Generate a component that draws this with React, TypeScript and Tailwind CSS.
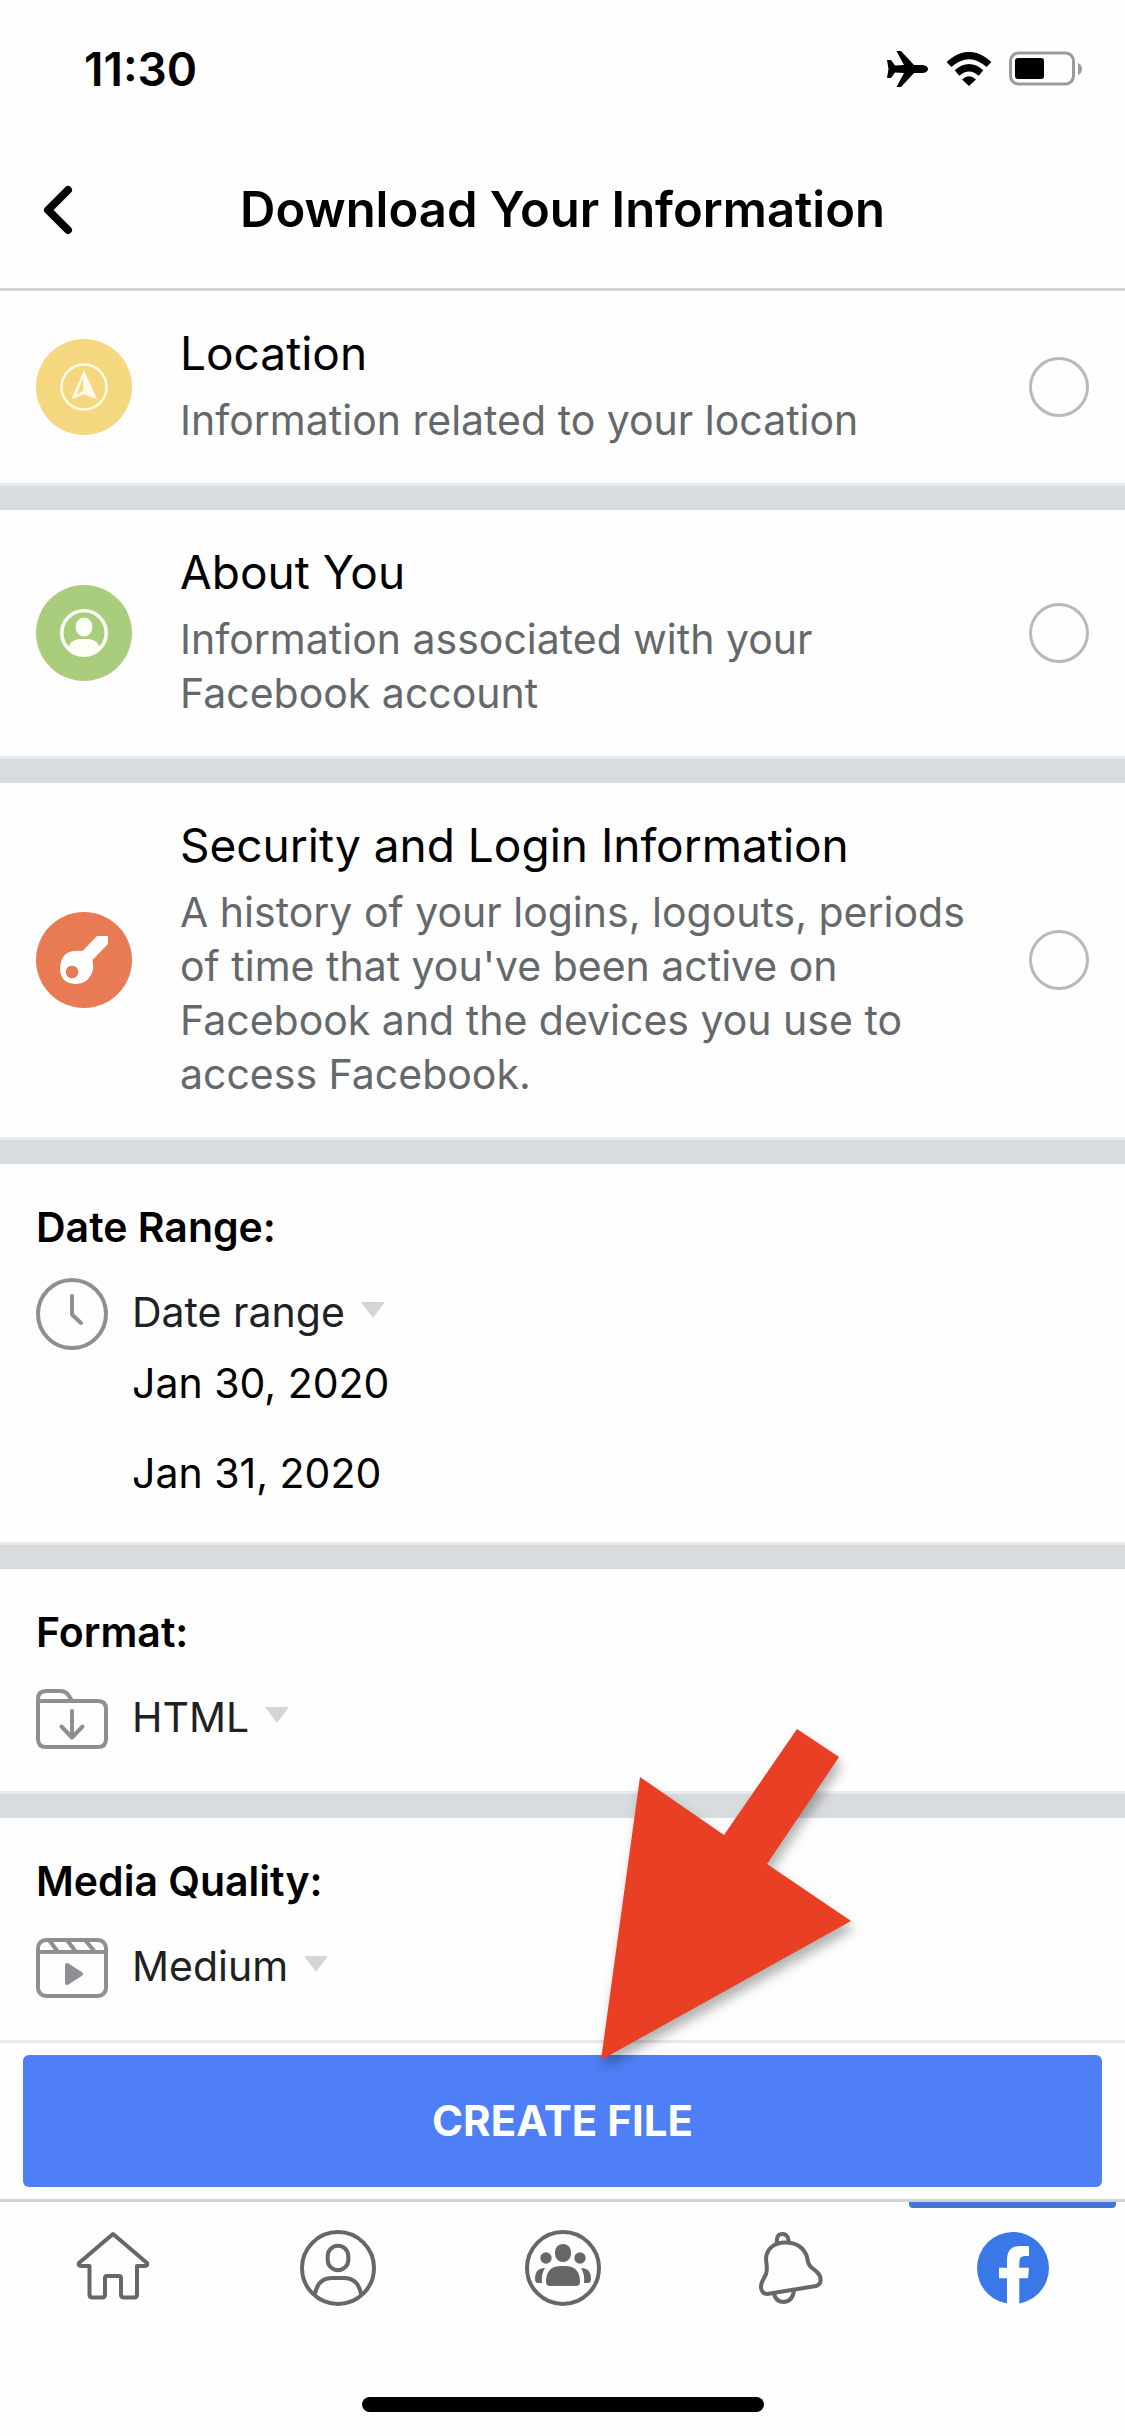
import { ReactNode, useState } from "react";

type Category = {
  id: string;
  title: string;
  description: string;
  color: string;
  icon: ReactNode;
};

const categories: Category[] = [
  {
    id: "location",
    title: "Location",
    description: "Information related to your location",
    color: "bg-[#f4d77e]",
    icon: (
      <svg viewBox="0 0 48 48" className="size-12" fill="none">
        <circle cx="24" cy="24" r="22.5" stroke="#fffbe8" strokeWidth="2.5" />
        <path d="M24 7 L37 36 Q30 34.500 24 31 Q18 34.500 11.500 36 Z" fill="#fffbe8" />
        <path d="M23 15 V28 L16.500 32 Z" fill="#f4d77e" />
      </svg>
    ),
  },
  {
    id: "about",
    title: "About You",
    description: "Information associated with your Facebook account",
    color: "bg-[#aacd7d]",
    icon: (
      <svg viewBox="0 0 48 48" className="size-12" fill="none">
        <circle cx="24" cy="24" r="22.2" stroke="#fbfff5" strokeWidth="3.6" />
        <ellipse cx="24" cy="18" rx="8.500" ry="9.500" fill="#fbfff5" />
        <path d="M8 39 Q10 31 19 30 H29 Q38 31 40 39 Q33 47 24 47 Q15 47 8 39 Z" fill="#fbfff5" />
      </svg>
    ),
  },
  {
    id: "security",
    title: "Security and Login Information",
    description:
      "A history of your logins, logouts, periods of time that you've been active on Facebook and the devices you use to access Facebook.",
    color: "bg-[#e87a54]",
    icon: (
      <svg viewBox="0 0 48 48" className="size-12">
        <path
          fillRule="evenodd"
          fill="#fff"
          d="M37 0 H48 V8 L32.500 24 Q33.500 29 33 34 Q29 48 15 48 Q0 47 0 32 Q1 17 13 15 Q18 14.500 22.500 15 Z M12 29.700 a6.300 6.300 0 1 0 0.100 0 Z"
        />
      </svg>
    ),
  },
];

const Divider = () => (
  <div className="h-[27px] bg-[#d9dcde] border-t-3 border-[#e8eaeb]" />
);

const Caret = () => (
  <svg viewBox="0 0 24 16" className="w-6 h-4 mb-2 pointer-events-none">
    <path d="M0 0 H24 L12 16 Z" fill="#d3d5d8" />
  </svg>
);

const ClockIcon = () => (
  <svg
    viewBox="0 0 72 72"
    className="size-18"
    fill="none"
    stroke="#8d8f92"
    strokeWidth="4"
    strokeLinecap="round"
    strokeLinejoin="round"
  >
    <circle cx="36" cy="36" r="34" />
    <path d="M36 18 V36.500 L45 45" />
  </svg>
);

const FolderIcon = () => (
  <svg
    viewBox="0 0 72 72"
    className="size-18"
    fill="none"
    stroke="#8d8f92"
    strokeWidth="4"
    strokeLinecap="round"
    strokeLinejoin="round"
  >
    <path d="M2 18 H62 Q70 18 70 26 V56 Q70 64 62 64 H10 Q2 64 2 56 V16 Q2 8 10 8 H24 Q30 8 33 13 L36 18" />
    <path d="M36 28 V54 M25.500 43.500 L36 54.500 L46.500 43.500" />
  </svg>
);

const MediaIcon = () => (
  <svg
    viewBox="0 0 72 72"
    className="size-18"
    fill="none"
    stroke="#8d8f92"
    strokeWidth="4"
    strokeLinejoin="round"
  >
    <rect x="2" y="8" width="68" height="56" rx="8" />
    <path d="M2 20 H70 M13 8 L22 20 M31 8 L40 20 M49 8 L59 20" />
    <path d="M31 33 V51 L45 42 Z" fill="#8d8f92" />
  </svg>
);

const CategoryRow = ({ category }: { category: Category }) => {
  const [checked, setChecked] = useState(false);

  return (
    <label htmlFor={category.id} className="flex items-center px-9">
      <span
        className={`flex items-center justify-center size-24 rounded-full shrink-0 ${category.color}`}
      >
        {category.icon}
      </span>
      <span className="flex-1 mx-12 pt-8 pb-9">
        <span className="block mb-2.5 text-[46px] leading-[60px] text-black">
          {category.title}
        </span>
        <span className="block text-[41px] leading-[54px] text-[#65686b]">
          {category.description}
        </span>
      </span>
      <input
        id={category.id}
        type="checkbox"
        checked={checked}
        onChange={(e) => setChecked(e.target.checked)}
        className="appearance-none size-15 shrink-0 rounded-full border-3 border-[#b7babd] checked:bg-[#4e7ff7]"
      />
    </label>
  );
};

type OptionProps = {
  id: string;
  heading: string;
  icon: ReactNode;
  options: string[];
  children?: ReactNode;
};

const OptionSection = ({ id, heading, icon, options, children }: OptionProps) => (
  <section className="px-9 py-9">
    <label
      htmlFor={id}
      className="block text-[41px] leading-[54px] font-semibold text-black"
    >
      {heading}
    </label>
    <div className="flex items-center mt-6">
      {icon}
      <select
        id={id}
        className="appearance-none field-sizing-content bg-transparent ml-6 mr-4 pb-1 text-[41px] leading-[54px] text-[#1f2123]"
      >
        {options.map((option) => (
          <option key={option}>{option}</option>
        ))}
      </select>
      <Caret />
    </div>
    {children}
  </section>
);

const StatusBar = () => (
  <div className="flex items-center justify-between h-33 pl-21 pr-[42px] pt-1.5">
    <span className="text-[46px] leading-[54px] font-semibold">11:30</span>
    <div className="flex items-center">
      <svg viewBox="0 0 42 38" className="w-[42px] h-[38px]">
        <path d="M0 10 H4 L8 15.500 L17 15 L9.500 1 H14 L27 15 H36 Q41 16 41 19 Q41 22 36 23 H27 L14 37 H9.500 L17 23 L8 22.500 L4 28 H0 L1.500 19 Z" />
      </svg>
      <svg viewBox="0 0 46 34" className="w-[46px] h-[34px] ml-[17px]" fill="none">
        <path d="M3 12.500 Q23 -5.500 43 12.500" stroke="#000" strokeWidth="7" />
        <path d="M11 21 Q23 10.500 35 21" stroke="#000" strokeWidth="7" />
        <path d="M16 27.500 Q23 21 30 27.500 L23 34 Z" fill="#000" />
      </svg>
      <svg viewBox="0 0 74 36" className="w-[74px] h-[36px] ml-[17px]">
        <rect x="1.500" y="2" width="63" height="31" rx="8" fill="none" stroke="#9b9b9b" strokeWidth="3" />
        <rect x="6" y="7" width="29" height="21" rx="3" />
        <path d="M69 12 Q73 14 73 18 Q73 22 69 24 Z" fill="#9b9b9b" />
      </svg>
    </div>
  </div>
);

const tabs = [
  {
    name: "Home",
    icon: (
      <svg viewBox="0 0 76 76" className="size-19" fill="none" stroke="#656768" strokeWidth="4" strokeLinejoin="round">
        <path d="M38 4 L72 33 Q73 36 70 36 H62 V64.500 Q62 67.500 59 67.500 H49 Q46 67.500 46 64.500 V48 Q46 46 44 46 H32 Q30 46 30 48 V64.500 Q30 67.500 27 67.500 H17.500 Q14.500 67.500 14.500 64.500 V36 H6 Q3 36 4 33 Z" />
      </svg>
    ),
  },
  {
    name: "Profile",
    icon: (
      <svg viewBox="0 0 76 76" className="size-19" fill="none" stroke="#656768" strokeWidth="4">
        <circle cx="38" cy="38" r="36" />
        <rect x="27.700" y="15.700" width="20.600" height="24.500" rx="10.300" />
        <path d="M15 64 Q18 48 32 48 H44 Q58 48 61 64" />
      </svg>
    ),
  },
  {
    name: "Groups",
    icon: (
      <svg viewBox="0 0 76 76" className="size-19" fill="#656768">
        <circle cx="38" cy="38" r="36" fill="none" stroke="#656768" strokeWidth="4" />
        <rect x="30" y="14" width="16" height="18" rx="8" />
        <circle cx="21" cy="28" r="5.700" />
        <circle cx="55" cy="28" r="5.700" />
        <path d="M21 52 Q21 36 36 36 H40 Q55 36 55 52 Q55 56 51 56 H25 Q21 56 21 52 Z" />
        <path d="M20 38 Q16 44 17 53 H13 Q10 53 10 49 Q10 38 20 38 Z M56 38 Q60 44 59 53 H63 Q66 53 66 49 Q66 38 56 38 Z" />
      </svg>
    ),
  },
  {
    name: "Notifications",
    icon: (
      <svg viewBox="0 0 76 76" className="size-19" fill="none" stroke="#656768" strokeWidth="4" strokeLinejoin="round">
        <path d="M16 44 C18 38 16 33 16 28 C17 18 25 12.500 35 12.500 C47 12.500 54 18 57 27 C58 31 57.500 34 61 37 L67 42 C72 47 72 54 66 56 L17 64 C12 64 9.500 58 12 52 Z" />
        <path d="M27 13 Q26 4 32.500 4 Q38 4 39 12 M24 64 Q26 72 34 72 Q43 71 44 60" />
      </svg>
    ),
  },
  {
    name: "Menu",
    icon: (
      <svg viewBox="0 0 76 76" className="size-19">
        <circle cx="38" cy="38" r="36" fill="#3b78e7" />
        <path d="M32 76 V48.300 H24 V37.700 H32 V30 Q32 16 45 16 H54 V26 H50 Q44.300 26 44.300 32 V37.700 H54 L53 48.300 H44.300 V76 Z" fill="#fff" />
      </svg>
    ),
  },
];

const App = () => {
  const [activeTab, setActiveTab] = useState("Menu");

  return (
    <main className="min-h-screen flex flex-col bg-[#fefefe] text-black font-['Inter','Liberation_Sans',sans-serif]">
      <StatusBar />
      <header className="relative flex items-center justify-center h-[159px] border-b-3 border-[#d1d2d3]">
        <button aria-label="Back" className="absolute left-9 top-13">
          <svg viewBox="0 0 40 52" className="w-10 h-13" fill="none">
            <path d="M32 6 L12 26 L32 46" stroke="#000" strokeWidth="8" strokeLinecap="round" strokeLinejoin="round" />
          </svg>
        </button>
        <h1 className="text-[49px] leading-[60px] font-semibold">
          Download Your Information
        </h1>
      </header>

      <form onSubmit={(e) => e.preventDefault()} className="flex-1 flex flex-col">
        {categories.map((category) => (
          <div key={category.id}>
            <CategoryRow category={category} />
            <Divider />
          </div>
        ))}

        <OptionSection
          id="date-range"
          heading="Date Range:"
          icon={<ClockIcon />}
          options={["Date range", "All of my data"]}
        >
          <div className="flex flex-col items-start gap-9 ml-24 mt-1.5 pb-1.5">
            <button type="button" className="text-[41px] leading-[54px]">
              Jan 30, 2020
            </button>
            <button type="button" className="text-[41px] leading-[54px]">
              Jan 31, 2020
            </button>
          </div>
        </OptionSection>
        <Divider />
        <OptionSection
          id="format"
          heading="Format:"
          icon={<FolderIcon />}
          options={["HTML", "JSON"]}
        />
        <Divider />
        <OptionSection
          id="quality"
          heading="Media Quality:"
          icon={<MediaIcon />}
          options={["Medium", "High", "Low"]}
        />

        <div className="relative mt-auto px-[23px] py-3 border-t-3 border-[#e8e9ea]">
          <button
            type="submit"
            className="w-full h-33 rounded-md bg-[#4e7ff7] text-white text-[42px] leading-[54px] font-bold"
          >
            CREATE FILE
          </button>
          {/* callout arrow pointing at the submit button */}
          <svg
            viewBox="0 0 280 360"
            className="absolute left-1/2 ml-[26px] bottom-[119px] w-[280px] h-[360px] pointer-events-none drop-shadow-[3px_8px_6px_rgba(0,0,0,0.3)]"
          >
            <path d="M208 9 L250 37 L178 144 L262 201 L12 340 L51 57 L135 115 Z" fill="#e93f25" />
          </svg>
        </div>
      </form>

      <nav className="grid grid-cols-5 h-39 border-t-3 border-[#d1d2d3]">
        {tabs.map((tab) => (
          <button
            key={tab.name}
            aria-label={tab.name}
            onClick={() => setActiveTab(tab.name)}
            className="flex flex-col items-center"
          >
            <span
              className={`w-11/12 h-1.5 mb-[22px] rounded-b-sm ${
                activeTab === tab.name ? "bg-[#4276d3]" : ""
              }`}
            />
            {tab.icon}
          </button>
        ))}
      </nav>
      <div className="flex justify-center pt-[42px] pb-6">
        <div className="w-[402px] h-[15px] rounded-full bg-black" />
      </div>
    </main>
  );
};

export default App;
